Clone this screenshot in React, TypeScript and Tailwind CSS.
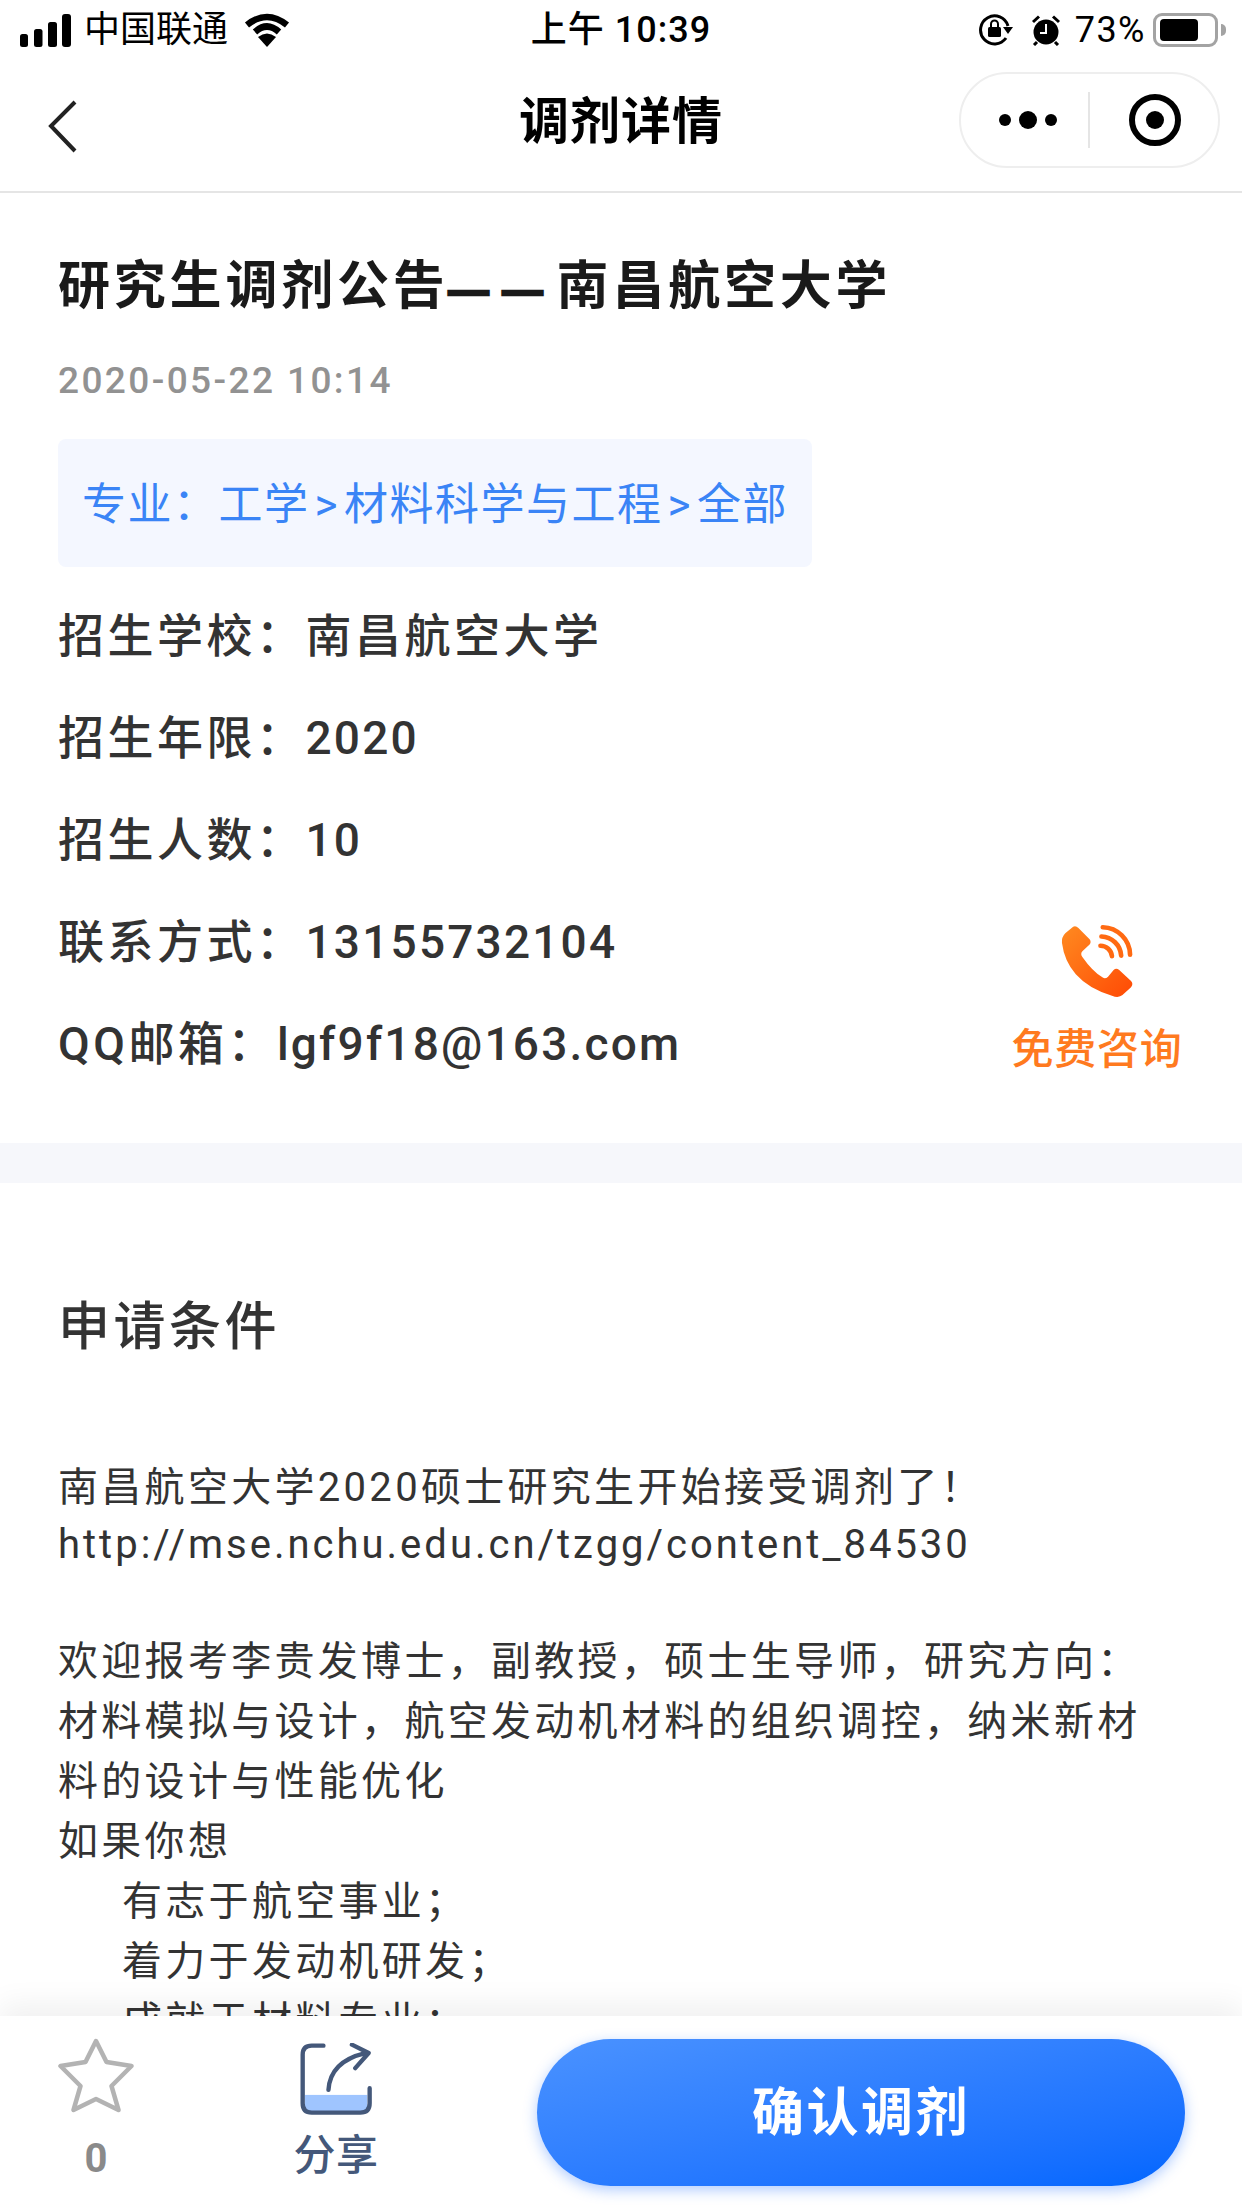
const fontStack = "font-['Roboto','Noto_Sans_CJK_SC',sans-serif]";

const infoRows = [
  { label: "招生学校：", value: "南昌航空大学", valueClass: "" },
  { label: "招生年限：", value: "2020", valueClass: "tracking-[2.2px]" },
  { label: "招生人数：", value: "10", valueClass: "tracking-[2.2px]" },
  { label: "联系方式：", value: "13155732104", valueClass: "tracking-[2.2px]" },
  { label: "QQ邮箱：", value: "lgf9f18@163.com", valueClass: "tracking-[2.2px]" },
];

function StatusBar() {
  return (
    <div className="grid h-[60px] grid-cols-3 items-center text-[36px] leading-[60px] text-black">
      <div className="flex items-center pl-5">
        <svg width="52" height="33" viewBox="0 0 52 33" fill="#000">
          <rect x="0" y="20" width="8" height="13" rx="2.5" />
          <rect x="14" y="15" width="8.5" height="18" rx="2.5" />
          <rect x="28" y="8" width="9" height="25" rx="2.5" />
          <rect x="42" y="0" width="9" height="33" rx="3" />
        </svg>
        <span className="ml-[12px]">中国联通</span>
        <svg className="ml-4" width="46" height="34" viewBox="0 0 46 34" fill="none">
          <path d="M3 12 Q23 -4 43 12" stroke="#000" strokeWidth="6.5" />
          <path d="M11 19 Q23 8 35 19" stroke="#000" strokeWidth="6.5" />
          <path d="M14 24 L23 34 L32 24 Q23 17 14 24 Z" fill="#000" />
        </svg>
      </div>
      <div className="text-center font-medium tracking-[1px]">上午 10:39</div>
      <div className="flex items-center justify-end pr-4">
        <svg width="34" height="32" viewBox="0 0 34 32" fill="none">
          <path d="M27 24 A14 14 0 1 1 29 12" stroke="#000" strokeWidth="3" />
          <path d="M24 13 L34 13 L29 20 Z" fill="#000" />
          <rect x="9" y="13" width="13" height="10" rx="1.5" fill="#000" />
          <path d="M12 13 V10 A3.5 3.5 0 0 1 19 10 V13" stroke="#000" strokeWidth="2" />
        </svg>
        <svg className="ml-[18px]" width="30" height="31" viewBox="0 0 30 31" fill="none">
          <circle cx="15" cy="17" r="12.5" fill="#000" />
          <path d="M2 7 L8 1.5 M28 7 L22 1.5 M6 27 L3 30 M24 27 L27 30" stroke="#000" strokeWidth="3" />
          <path d="M15 9 V18 H9" stroke="#fff" strokeWidth="2" />
        </svg>
        <span className="ml-[14px] tracking-[1.5px]">73%</span>
        <div className="ml-[7px] flex items-center">
          <div className="flex h-[34px] w-[65px] items-center rounded-[9px] border-[3px] border-[#a3a3a3] pl-1">
            <div className="h-[22px] w-[38px] rounded-[4px] bg-black" />
          </div>
          <div className="ml-[3px] h-[12px] w-[5px] rounded-r-full bg-[#a3a3a3]" />
        </div>
      </div>
    </div>
  );
}

function NavBar() {
  return (
    <div className="relative flex h-[133px] items-start justify-between border-b-2 border-[#e5e5e5] pl-[48px] pr-[22px]">
      <svg className="mt-[40px]" width="30" height="54" viewBox="0 0 30 54" fill="none">
        <path d="M27 2 L3 26 L27 51" stroke="#222" strokeWidth="4" />
      </svg>
      <div className="absolute left-0 right-0 top-[30px] text-center text-[50px] font-bold leading-[64px] tracking-[1px] text-black">
        调剂详情
      </div>
      <div className="mt-3 flex h-[96px] w-[261px] items-center rounded-full border-2 border-[#eeeeee]">
        <div className="ml-[38px] flex w-[58px] items-center justify-between">
          <span className="h-3 w-3 rounded-full bg-black" />
          <span className="h-[18px] w-[18px] rounded-full bg-black" />
          <span className="h-3 w-3 rounded-full bg-black" />
        </div>
        <div className="ml-[31px] h-[56px] w-0.5 bg-[#e5e5e5]" />
        <div className="ml-[39px] flex h-[52px] w-[52px] items-center justify-center rounded-full border-[6px] border-black">
          <div className="h-[18px] w-[18px] rounded-full bg-black" />
        </div>
      </div>
    </div>
  );
}

function CallButton() {
  return (
    <div className="absolute right-[60px] top-[925px] flex w-[170px] flex-col items-center">
      <svg width="73" height="74" viewBox="246 75 220 225">
        <defs>
          <linearGradient id="phoneFill" x1="0" y1="0" x2="1" y2="1">
            <stop offset="0" stopColor="#ff8a20" />
            <stop offset="1" stopColor="#ff4a05" />
          </linearGradient>
        </defs>
        <path
          d="M282 80 Q290 76 298 84 L332 118 Q338 126 332 134 L310 155 Q303 163 310 172 Q340 215 372 235 Q380 240 388 232 L405 212 Q413 204 422 212 L458 245 Q466 254 458 264 L432 288 Q420 298 400 290 Q330 270 290 225 Q255 185 248 130 Q246 112 258 100 Z"
          fill="url(#phoneFill)"
        />
        <g fill="none" stroke="#ff6a12" strokeWidth="14" strokeLinecap="round">
          <path d="M372 82 A85 85 0 0 1 455 165" />
          <path d="M368 110 A62 62 0 0 1 428 168" />
          <path d="M365 138 A35 35 0 0 1 400 170" />
        </g>
      </svg>
      <div className="mt-[26px] whitespace-nowrap text-[42px] font-medium leading-[50px] tracking-[0.8px] text-[#ff7a1f]">
        免费咨询
      </div>
    </div>
  );
}

function BottomBar() {
  return (
    <div className="absolute bottom-0 left-0 right-0 flex h-[192px] items-start bg-white pl-[58px] shadow-[0_-12px_28px_rgba(0,0,0,0.06)]">
      <div className="mt-[22px] flex w-[76px] flex-col items-center">
        <svg width="76" height="75" viewBox="0 0 75 75" fill="none">
          <path
            d="M37.5 3 L48 24 L73 28 L53 48 L60 72 L37.5 61 L15 72 L22 48 L2 28 L27 24 Z"
            stroke="#b3b3b3"
            strokeWidth="4.5"
            strokeLinejoin="round"
          />
        </svg>
        <div className="mt-[21px] text-[40px] font-bold leading-[50px] text-[#8a8a8a]">0</div>
      </div>
      <div className="ml-[160px] mt-[27px] flex w-[84px] flex-col items-center">
        <svg width="72" height="72" viewBox="780 70 215 215" fill="none">
          <rect x="795" y="225" width="186" height="48" fill="#9fc5ff" />
          <path
            d="M850 78 H815 Q788 78 788 105 V250 Q788 278 815 278 H960 Q988 278 988 250 V205"
            stroke="#44587a"
            strokeWidth="13"
            strokeLinecap="round"
          />
          <path
            d="M865 210 Q870 125 975 100 M935 75 L985 100 L945 145"
            stroke="#44587a"
            strokeWidth="13"
            strokeLinecap="round"
            strokeLinejoin="round"
          />
        </svg>
        <div className="mt-[16px] whitespace-nowrap text-[42px] font-medium leading-[50px] tracking-[0.5px] text-[#44587a]">分享</div>
      </div>
      <div className="ml-[159px] mt-[23px] flex h-[147px] w-[648px] items-center justify-center rounded-full bg-gradient-to-br from-[#4a92ff] to-[#0066ff] pt-[3px] text-[52px] font-bold tracking-[2.5px] text-white shadow-[0_4px_14px_rgba(30,110,255,0.35)]">
        确认调剂
      </div>
    </div>
  );
}

export default function App() {
  return (
    <div className={`relative h-[2208px] w-[1242px] overflow-hidden bg-white ${fontStack}`}>
      <StatusBar />
      <NavBar />
      <div className="px-[58px] pb-[48px] pt-[64px]">
        <h1 className="h-[60px] whitespace-nowrap text-[52px] font-bold leading-[60px] tracking-[3.8px] text-[#1a1a1a]">
          研究生调剂公告
          <span className="font-['Liberation_Sans'] text-[40px] leading-none tracking-[14px] [-webkit-text-stroke:2.5px_#1a1a1a]">——</span>
          南昌航空大学
        </h1>
        <div className="mt-[44px] text-[37px] font-medium leading-[40px] tracking-[2.4px] text-[#929292]">
          2020-05-22 10:14
        </div>
        <div className="mt-[38px] flex h-[128px] w-[754px] items-center rounded-lg bg-[#f4f7ff] pl-[24px] pt-[3px] text-[44px] leading-[60px] tracking-[1.5px] text-[#3a84f6]">
          专业：工学<span className="mx-[5px]">&gt;</span>材料科学与工程<span className="mx-[5px]">&gt;</span>全部
        </div>
        <div className="mt-[18px]">
          {infoRows.map((row) => (
            <div key={row.label} className="h-[102px] text-[46px] font-medium leading-[102px] tracking-[3.5px] text-[#333333]">
              {row.label}
              <span className={row.valueClass}>{row.value}</span>
            </div>
          ))}
        </div>
      </div>
      <CallButton />
      <div className="h-[40px] bg-[#f6f7fb]" />
      <div className="pl-[58px] pr-[82px] pt-[115px]">
        <h2 className="text-[52px] font-medium leading-[60px] tracking-[3.5px] text-[#333333]">申请条件</h2>
        <div className="mt-[101px] text-[40px] leading-[60px] tracking-[3.3px] text-[#333333]">
          <p className="leading-[57px]">南昌航空大学2020硕士研究生开始接受调剂了！</p>
          <p className="leading-[57px] tracking-[3px]">http://mse.nchu.edu.cn/tzgg/content_84530</p>
          <p className="h-[59px]" />
          <p>欢迎报考李贵发博士，副教授，硕士生导师，研究方向：材料模拟与设计，航空发动机材料的组织调控，纳米新材料的设计与性能优化</p>
          <p>如果你想</p>
          <p className="pl-[64px]">有志于航空事业；</p>
          <p className="pl-[64px]">着力于发动机研发；</p>
          <p className="pl-[64px]">成就于材料专业；</p>
        </div>
      </div>
      <BottomBar />
    </div>
  );
}
